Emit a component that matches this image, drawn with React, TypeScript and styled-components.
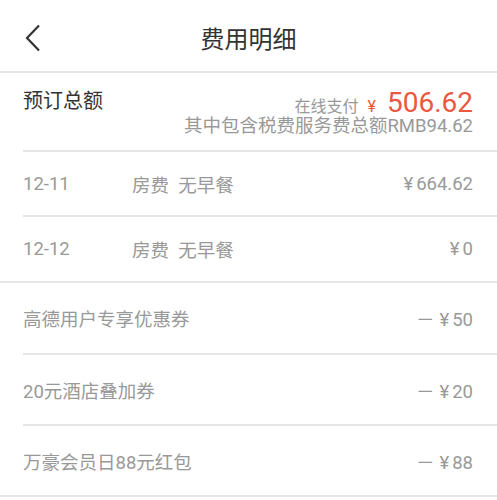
import React from 'react';
import styled, {createGlobalStyle} from "styled-components";

type FeeType = {
    date?: string
    title: string
    minus?: boolean
    price: string
}

const nights: FeeType[] = [
    {date: '12-11', title: '房费  无早餐', price: '664.62'},
    {date: '12-12', title: '房费  无早餐', price: '0'},
]

const discounts: FeeType[] = [
    {title: '高德用户专享优惠券', minus: true, price: '50'},
    {title: '20元酒店叠加券', minus: true, price: '20'},
    {title: '万豪会员日88元红包', minus: true, price: '88'},
]

const GlobalStyle = createGlobalStyle`
  body {
    margin: 0;
    background: #fff;
    font-family: Roboto, "Noto Sans CJK SC", sans-serif;
  }
`

export default function App() {
    return (
        <Page>
            <GlobalStyle/>
            <Header>
                <BackButton>
                    <svg width="16" height="28" viewBox="0 0 16 28">
                        <path d="M14 1.5 L2 14 L14 26.5" fill="none" stroke="#333" strokeWidth="2.2"/>
                    </svg>
                </BackButton>
                <Title>费用明细</Title>
            </Header>

            <Section>
                <SummaryRow>
                    <Label>预订总额</Label>
                    <SummaryRight>
                        <PayLine>
                            <PayText>在线支付</PayText>
                            <Yen>¥</Yen>
                            <Total>506.62</Total>
                        </PayLine>
                        <TaxLine>其中包含税费服务费总额RMB94.62</TaxLine>
                    </SummaryRight>
                </SummaryRow>
                {nights.map((el, index) => (
                    <Row key={index} last={index === nights.length - 1} height={index === 0 ? 63 : 64}>
                        <DateCell>{el.date}</DateCell>
                        <Cell>{el.title}</Cell>
                        <Price>
                            <Sign>¥</Sign>{el.price}
                        </Price>
                    </Row>
                ))}
            </Section>

            <Section>
                {discounts.map((el, index) => (
                    <Row key={index} last={index === discounts.length - 1} height={index === 0 ? 70 : 69}>
                        <Cell>{el.title}</Cell>
                        <Price>
                            {el.minus && <Minus>－</Minus>}
                            <Sign>¥</Sign>{el.price}
                        </Price>
                    </Row>
                ))}
            </Section>
        </Page>
    );
}

const Page = styled.div`
  width: 497px;
  background: #fff;
`

const Header = styled.div`
  height: 71px;
  display: flex;
  align-items: center;
  justify-content: center;
  position: relative;
  border-bottom: 2px solid #e6e6e6;
`

const BackButton = styled.div`
  position: absolute;
  left: 25px;
  top: 24px;
  width: 16px;
  height: 28px;
`

const Title = styled.div`
  font-size: 24px;
  color: #333;
  line-height: 30px;
  margin-top: 8px;
`

const Section = styled.div`
  border-bottom: 2px solid #e6e6e6;
`

const SummaryRow = styled.div`
  margin-left: 23px;
  padding-right: 24px;
  height: 77px;
  display: flex;
  justify-content: space-between;
  align-items: flex-start;
  border-bottom: 2px solid #e6e6e6;
`

const Label = styled.div`
  font-size: 20px;
  color: #333;
  line-height: 28px;
  margin-top: 14px;
`

const SummaryRight = styled.div`
  display: flex;
  flex-direction: column;
  align-items: flex-end;
  padding-top: 17px;
`

const PayLine = styled.div`
  display: flex;
  align-items: baseline;
  line-height: 26px;
  height: 26px;
`

const PayText = styled.span`
  font-size: 16px;
  color: #999;
`

const Yen = styled.span`
  font-size: 16px;
  color: #eb5840;
  margin-left: 9px;
  margin-right: 11px;
`

const Total = styled.span`
  font-size: 28px;
  color: #eb5840;
`

const TaxLine = styled.div`
  font-size: 18.5px;
  color: #999;
  line-height: 20px;
`

const Row = styled.div<{ last?: boolean, height: number }>`
  margin-left: 23px;
  padding-right: 24px;
  height: ${props => props.height}px;
  display: flex;
  align-items: center;
  font-size: 18.5px;
  color: #999;
  border-bottom: ${props => props.last ? 'none' : '2px solid #e6e6e6'};
`

const DateCell = styled.div`
  width: 109px;
`

const Cell = styled.div`
  flex: 1;
  white-space: pre;
`

const Price = styled.div`
  display: flex;
  align-items: baseline;
`

const Sign = styled.span`
  margin-right: 3px;
`

const Minus = styled.span`
  margin-right: 5px;
`
